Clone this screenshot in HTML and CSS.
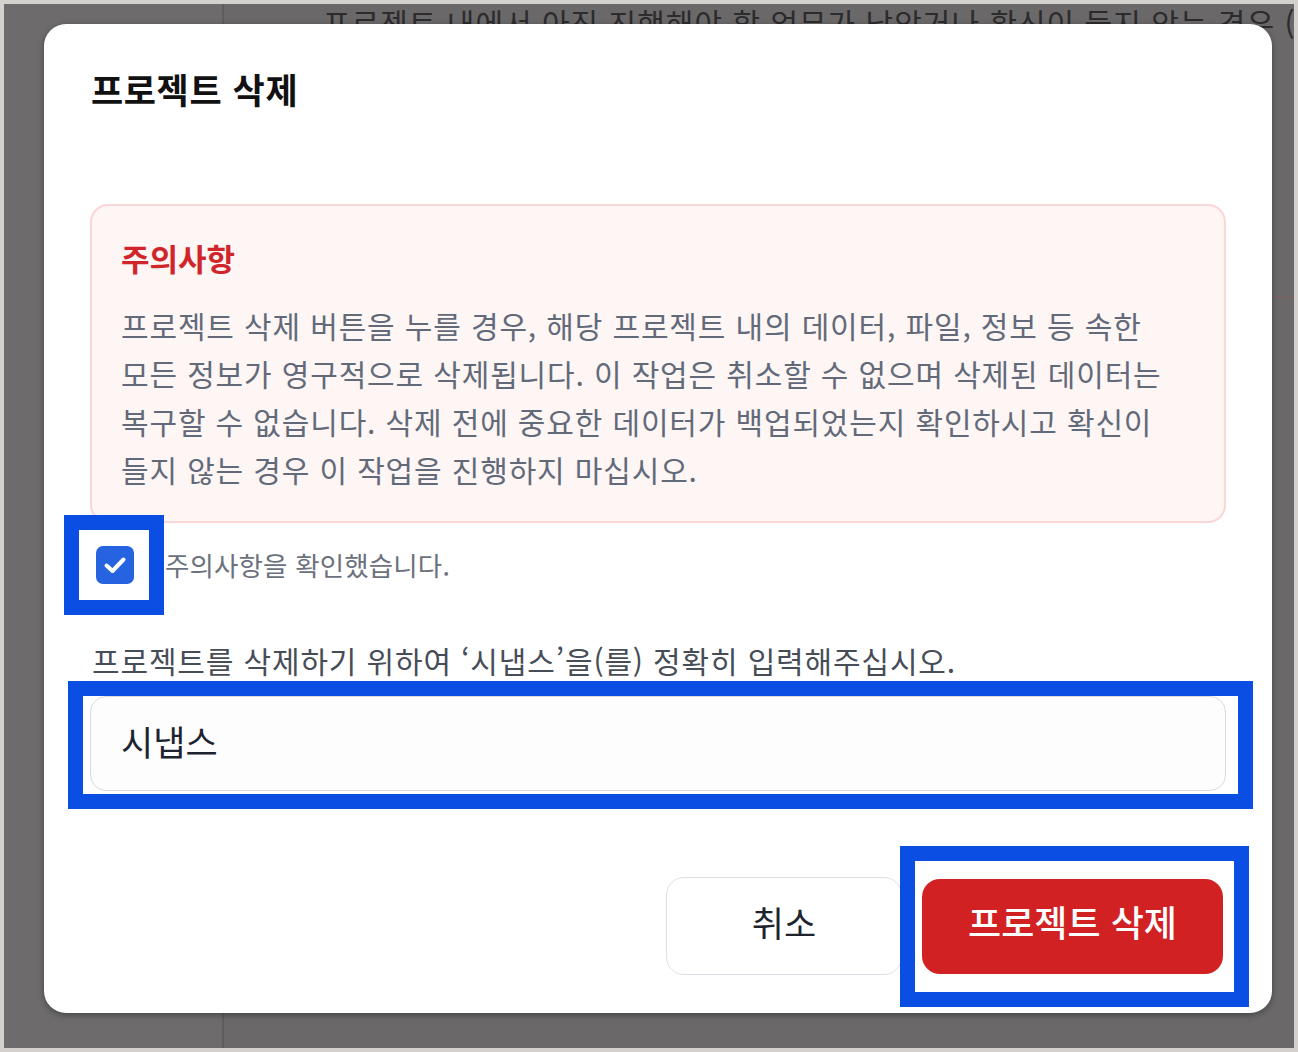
FILE: index.html
```html
<!DOCTYPE html>
<html lang="ko">
<head>
<meta charset="utf-8">
<title>프로젝트 삭제</title>
<link rel="stylesheet" href="styles.css">
</head>
<body>
<div class="screen">
  <div class="page-bg">
    <div class="bg-sidebar"></div>
    <div class="bg-main">
      <p class="bg-text">프로젝트 내에서 아직 진행해야 할 업무가 남았거나 확신이 들지 않는 경우 (</p>
      <div class="bg-rule"></div>
    </div>
  </div>

  <div class="modal" role="dialog" aria-labelledby="modal-title">
    <h1 class="modal-title" id="modal-title">프로젝트 삭제</h1>

    <section class="warning">
      <h2 class="warning-title">주의사항</h2>
      <p class="warning-text">프로젝트 삭제 버튼을 누를 경우, 해당 프로젝트 내의 데이터, 파일, 정보 등 속한<br>모든 정보가 영구적으로 삭제됩니다. 이 작업은 취소할 수 없으며 삭제된 데이터는<br>복구할 수 없습니다. 삭제 전에 중요한 데이터가 백업되었는지 확인하시고 확신이<br>들지 않는 경우 이 작업을 진행하지 마십시오.</p>
    </section>

    <label class="confirm">
      <span class="checkbox">
        <svg width="38" height="38" viewBox="0 0 38 38" aria-hidden="true">
          <path d="M10.5 19.5 L16.5 25 L27.5 13.5" fill="none" stroke="#ffffff" stroke-width="4" stroke-linecap="round" stroke-linejoin="round"/>
        </svg>
      </span>
      <span class="confirm-text">주의사항을 확인했습니다.</span>
    </label>

    <p class="input-label">프로젝트를 삭제하기 위하여 ‘시냅스’을(를) 정확히 입력해주십시오.</p>
    <div class="input-wrap">
      <input class="name-input" type="text" value="시냅스">
    </div>

    <div class="actions">
      <button class="btn-cancel" type="button">취소</button>
      <div class="delete-wrap">
        <button class="btn-delete" type="button">프로젝트 삭제</button>
      </div>
    </div>
  </div>
</div>
</body>
</html>
```

FILE: styles.css
```css
* { box-sizing: border-box; }

html, body {
  margin: 0;
  padding: 0;
}

body {
  width: 1298px;
  height: 1052px;
  overflow: hidden;
  font-family: "Noto Sans CJK KR", "Noto Sans", sans-serif;
  background: #d4d0cd;
}

.screen {
  position: relative;
  width: 1298px;
  height: 1052px;
  border: 4px solid #d4d0cd;
  background: #6a6868;
  overflow: hidden;
}

.page-bg {
  display: flex;
  height: 100%;
}

.bg-sidebar {
  width: 220px;
  flex: none;
  border-right: 2px solid #5f5c5c;
  background: #6d6b6b;
}

.bg-main {
  flex: 1;
  padding-left: 99px;
}

.bg-text {
  margin: 0;
  font-size: 30px;
  line-height: 36px;
  letter-spacing: 1px;
  white-space: nowrap;
  color: #2c2b2e;
}

.bg-rule {
  margin-top: 256px;
  height: 2px;
  background: #786464;
}

/* modal (overlay) */
.modal {
  position: absolute;
  left: 40px;
  top: 20px;
  width: 1228px;
  padding: 45px 46px 38px;
  background: #ffffff;
  border-radius: 22px;
  box-shadow: 0 2px 6px rgba(0, 0, 0, 0.35);
}

.modal-title {
  margin: 0;
  padding-left: 1px;
  font-size: 35px;
  line-height: 40px;
  letter-spacing: 0.6px;
  font-weight: 700;
  color: #111111;
}

.warning {
  margin-top: 95px;
  padding: 32px 29px 28px;
  border: 2px solid #fbd6d6;
  border-radius: 18px;
  background: #fef5f5;
}

.warning-title {
  margin: 0 0 23px;
  font-size: 31px;
  line-height: 40px;
  font-weight: 700;
  color: #d0262b;
}

.warning-text {
  margin: 0;
  font-size: 30px;
  line-height: 48px;
  letter-spacing: 0.85px;
  color: #626a79;
  white-space: nowrap;
}

.confirm {
  display: flex;
  align-items: center;
  gap: 31px;
  margin-top: 23px;
  height: 38px;
}

.checkbox {
  position: relative;
  flex: none;
  width: 38px;
  height: 38px;
  margin-left: 6px;
  border-radius: 7px;
  background: #2563e0;
  display: flex;
}

.checkbox::after {
  content: "";
  position: absolute;
  left: -32px;
  top: -31px;
  right: -30px;
  bottom: -31px;
  border: 15px solid #0a4ee4;
}

.confirm-text {
  font-size: 26.5px;
  line-height: 38px;
  letter-spacing: 0.15px;
  color: #6b717d;
}

.input-label {
  margin: 58px 0 0;
  padding-left: 2px;
  font-size: 30px;
  line-height: 36px;
  letter-spacing: 0.85px;
  color: #474d57;
  white-space: nowrap;
}

.input-wrap {
  position: relative;
  margin-top: 18px;
}

.input-wrap::after {
  content: "";
  position: absolute;
  left: -22px;
  top: -15px;
  right: -27px;
  bottom: -18px;
  border: 15px solid #0a4ee4;
  pointer-events: none;
}

.name-input {
  display: block;
  width: 100%;
  height: 95px;
  padding: 0 30px 6px;
  border: 1.5px solid #d9dbe0;
  border-radius: 16px;
  background: #fdfdfe;
  font-family: inherit;
  font-size: 35px;
  color: #1d2430;
  outline: none;
}

.actions {
  display: flex;
  justify-content: flex-end;
  align-items: center;
  gap: 20px;
  margin-top: 86px;
  padding-right: 3px;
}

.btn-cancel {
  width: 236px;
  height: 98px;
  padding: 0 0 10px;
  border: 1.5px solid #dcdfe5;
  border-radius: 18px;
  background: #ffffff;
  font-family: inherit;
  font-size: 35px;
  font-weight: 400;
  color: #1f242c;
}

.delete-wrap {
  position: relative;
}

.delete-wrap::after {
  content: "";
  position: absolute;
  left: -22px;
  top: -33px;
  right: -26px;
  bottom: -33px;
  border: 15px solid #0a4ee4;
  pointer-events: none;
}

.btn-delete {
  display: block;
  width: 301px;
  height: 95px;
  padding: 0 0 10px;
  border: none;
  border-radius: 18px;
  background: #d22122;
  font-family: inherit;
  font-size: 36px;
  font-weight: 500;
  color: #ffffff;
}
```
